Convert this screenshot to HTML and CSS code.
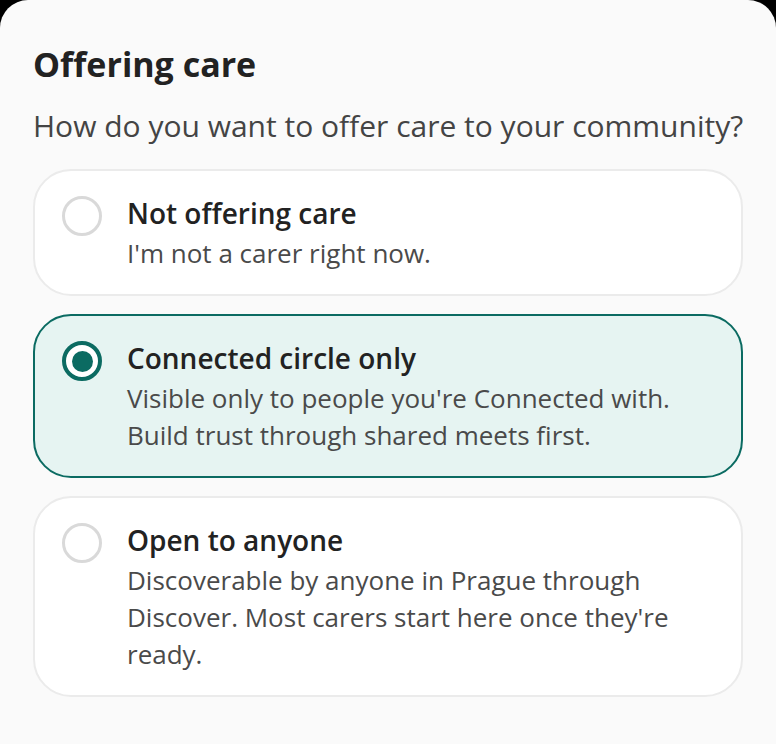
FILE: index.html
```html
<!DOCTYPE html>
<html lang="en">
<head>
<meta charset="utf-8">
<title>Offering care</title>
<link rel="stylesheet" href="styles.css">
</head>
<body>
<div class="window">
  <h1 class="title">Offering care</h1>
  <p class="subtitle">How do you want to offer care to your community?</p>
  <div class="options">
    <div class="option">
      <span class="radio"></span>
      <div class="text">
        <div class="label">Not offering care</div>
        <div class="desc">I'm not a carer right now.</div>
      </div>
    </div>
    <div class="option selected">
      <span class="radio"></span>
      <div class="text">
        <div class="label">Connected circle only</div>
        <div class="desc">Visible only to people you're Connected with. Build trust through shared meets first.</div>
      </div>
    </div>
    <div class="option">
      <span class="radio"></span>
      <div class="text">
        <div class="label">Open to anyone</div>
        <div class="desc">Discoverable by anyone in Prague through Discover. Most carers start here once they're ready.</div>
      </div>
    </div>
  </div>
</div>
</body>
</html>
```
FILE: styles.css
```css
* { box-sizing: border-box; }
html, body { margin: 0; padding: 0; background: #000; }
body { font-family: "Open Sans", "Noto Sans", sans-serif; }
.window {
  min-height: 744px;
  background: #fafafa;
  border-radius: 28px 28px 0 0;
  padding: 42px 33px 40px;
}
.title {
  margin: 0;
  font-size: 34px;
  line-height: 44px;
  font-weight: 700;
  color: #222;
}
.subtitle {
  margin: 20px 0 23px;
  font-size: 30px;
  line-height: 40px;
  color: #444;
  white-space: nowrap;
}
.options {
  display: flex;
  flex-direction: column;
  gap: 18px;
}
.option {
  display: flex;
  align-items: flex-start;
  gap: 25px;
  background: #fff;
  border: 2px solid #ebebeb;
  border-radius: 38px;
  padding: 23px 24px 22px 27px;
}
.option.selected {
  background: #e6f4f2;
  border-color: #0b6b62;
}
.radio {
  flex: none;
  width: 40px;
  height: 40px;
  margin-top: 2px;
  border-radius: 50%;
  border: 3.5px solid #d9d9d9;
  background: #fff;
  display: flex;
  align-items: center;
  justify-content: center;
}
.selected .radio {
  border: 4.5px solid #0b6b62;
}
.selected .radio::after {
  content: "";
  width: 21px;
  height: 21px;
  border-radius: 50%;
  background: #0b6b62;
}
.label {
  font-size: 28px;
  line-height: 38px;
  font-weight: 600;
  color: #222;
  margin-bottom: 3px;
}
.desc {
  font-size: 26px;
  line-height: 37px;
  color: #4a4a4a;
}
```
